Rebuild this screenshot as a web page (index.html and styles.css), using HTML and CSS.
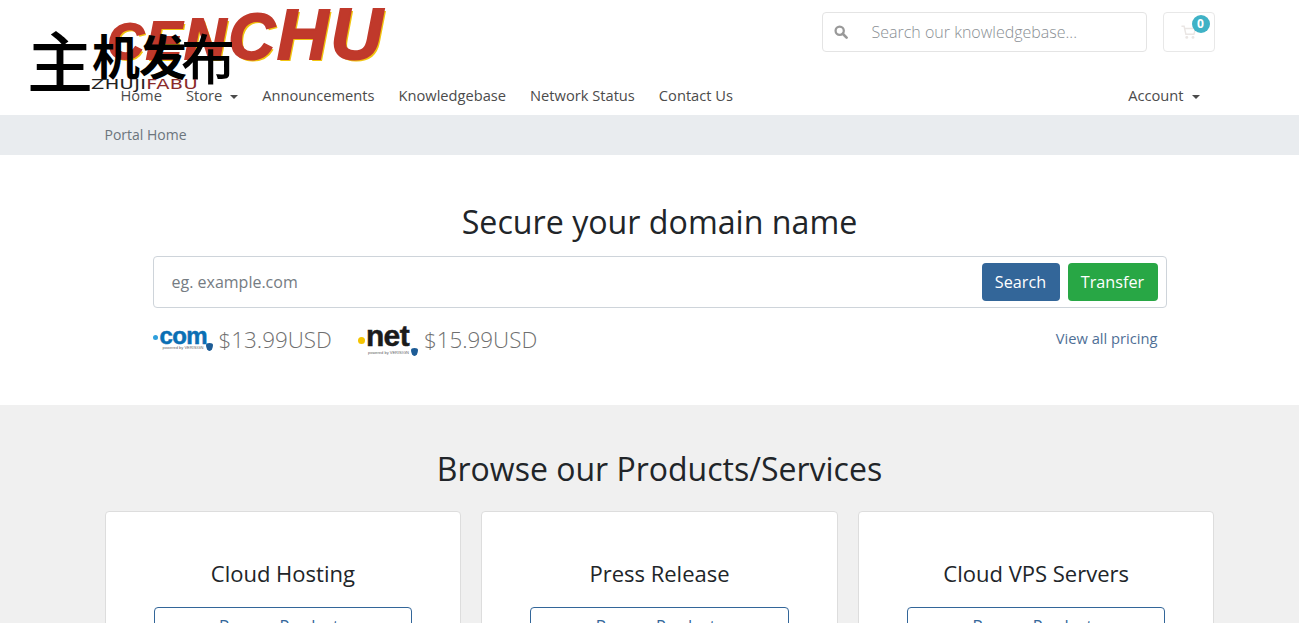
FILE: index.html
```html
<!DOCTYPE html>
<html lang="en">
<head>
<meta charset="utf-8">
<title>Portal Home</title>
<link rel="stylesheet" href="styles.css">
</head>
<body>
<header class="header">
  <div class="wrap">
    <div class="container">
      <div class="top-row">
        <div class="logo-main"><span class="l1">C</span><span class="l2">E</span><span class="l3">N</span><span class="l4">C</span><span class="l5">H</span><span class="l6">U</span></div>
        <div class="top-tools">
          <div class="kb-search">
            <svg class="kb-icon" viewBox="0 0 16 16" width="14" height="14"><circle cx="6.5" cy="6.5" r="4.7" fill="none" stroke="#999" stroke-width="2.6"/><path d="M10 10l4.4 4.4" stroke="#999" stroke-width="3" stroke-linecap="round"/></svg>
            <span class="kb-text">Search our knowledgebase...</span>
          </div>
          <div class="cart">
            <svg class="cart-icon" viewBox="0 0 18 16" width="16" height="15"><path d="M0.5 1h3l2 9h9l2-6.5H4.4" fill="none" stroke="#eae6e4" stroke-width="1.6"/><circle cx="6.5" cy="13.5" r="1.6" fill="#eae6e4"/><circle cx="13.5" cy="13.5" r="1.6" fill="#eae6e4"/></svg>
            <span class="cart-badge">0</span>
          </div>
        </div>
      </div>
      <nav class="nav">
        <ul class="nav-list">
          <li class="nav-item">Home</li>
          <li class="nav-item caret">Store</li>
          <li class="nav-item">Announcements</li>
          <li class="nav-item">Knowledgebase</li>
          <li class="nav-item">Network Status</li>
          <li class="nav-item">Contact Us</li>
        </ul>
        <div class="nav-item caret">Account</div>
      </nav>
    </div>
  </div>
  <div class="logo-over">
    <div class="logo-cn"><span class="cn-big">主</span><span class="cn-a">机</span><span class="cn-a">发</span><span class="cn-b">布</span></div>
    <div class="logo-en">ZHUJI<span class="logo-en-red">FABU</span></div>
  </div>
</header>

<div class="crumb-band">
  <div class="wrap"><div class="container crumb">Portal Home</div></div>
</div>

<section class="domain-band">
  <div class="wrap">
    <div class="container domain">
      <h2 class="domain-title">Secure your domain name</h2>
      <div class="domain-box">
        <span class="domain-placeholder">eg. example.com</span>
        <span class="btn btn-blue">Search</span>
        <span class="btn btn-green">Transfer</span>
      </div>
      <div class="tld-row">
        <div class="tld">
          <div class="tld-logo">
            <div class="tld-name com"><span class="dot dot-blue"></span>com</div>
            <div class="tld-sub sub-com"><span class="tiny">powered by VERISIGN</span><span class="shield"></span></div>
          </div>
          <span class="tld-price">$13.99USD</span>
        </div>
        <div class="tld">
          <div class="tld-logo">
            <div class="tld-name net"><span class="dot dot-yellow"></span>net</div>
            <div class="tld-sub sub-net"><span class="tiny">powered by VERISIGN</span><span class="shield"></span></div>
          </div>
          <span class="tld-price">$15.99USD</span>
        </div>
        <span class="pricing-link">View all pricing</span>
      </div>
    </div>
  </div>
</section>

<section class="products-band">
  <div class="wrap">
    <div class="container">
      <h2 class="products-title">Browse our Products/Services</h2>
      <div class="cards">
        <div class="card"><h3 class="card-title">Cloud Hosting</h3><span class="card-btn">Browse Products</span></div>
        <div class="card"><h3 class="card-title">Press Release</h3><span class="card-btn">Browse Products</span></div>
        <div class="card"><h3 class="card-title">Cloud VPS Servers</h3><span class="card-btn">Browse Products</span></div>
      </div>
    </div>
  </div>
</section>
</body>
</html>
```
FILE: styles.css
```css
* { box-sizing: border-box; }
html, body { margin: 0; height: 623px; overflow: hidden; }
body { font-family: "Open Sans", sans-serif; font-size: 14px; color: #212529; background: #fff; }
.wrap { padding-left: 20px; }
.container { width: 1110px; margin: 0 auto; }

.header { position: relative; height: 115px; background: #fff; }
.top-row { display: flex; justify-content: space-between; height: 76px; }
.logo-main {
  font-family: "Liberation Sans", sans-serif; font-weight: 700; font-style: italic;
  height: 70px; line-height: 68px; color: #c0392b; white-space: nowrap;
  -webkit-text-stroke: 2px #c0392b; text-shadow: 2px 2px 0 #f1c40f; margin-left: 3px; letter-spacing: 2.3px;
}
.l1 { font-size: 50px; }
.l2 { font-size: 54px; }
.l3 { font-size: 58px; }
.l4 { font-size: 64px; }
.l5 { font-size: 71px; }
.l6 { font-size: 72px; }
.top-tools { display: flex; gap: 16px; padding-top: 12px; }
.kb-search {
  width: 325px; height: 40px; border: 1px solid #e4e4e4; border-radius: 4px;
  display: flex; align-items: center; padding-left: 11px; gap: 24px;
}
.kb-text { font-size: 16px; font-weight: 300; color: #8a8f94; }
.cart { position: relative; width: 52px; height: 40px; border: 1px solid #e8e8e8; border-radius: 4px; padding: 12px 0 0 17px; }
.cart-icon { display: block; }
.cart-badge {
  position: absolute; top: 2px; left: 28px; width: 18px; height: 18px; border-radius: 50%;
  background: #3fb2c6; color: #fff; font-size: 12px; font-weight: 700; line-height: 18px; text-align: center;
}
.nav { display: flex; justify-content: space-between; height: 39px; margin-right: 3px; }
.nav-list { list-style: none; margin: 0 0 0 4px; padding: 0; display: flex; }
.nav-item { padding: 0 12px; line-height: 38px; color: #4b4b4b; font-size: 14.67px; white-space: nowrap; }
.caret::after {
  content: ""; display: inline-block; margin-left: 8px; vertical-align: 2px;
  border-top: 4px solid #4b4b4b; border-left: 4px solid transparent; border-right: 4px solid transparent;
}
.logo-over { position: absolute; left: 30px; top: 24px; width: 205px; height: 68px; }
.logo-cn {
  font-family: "Noto Sans CJK SC", sans-serif; font-size: 48px; line-height: 68px;
  color: #000; white-space: nowrap;
}
.cn-big { font-size: 66px; font-weight: 500; margin-right: -1px; margin-left: -3px; }
.cn-a { font-weight: 700; margin-right: -1px; position: relative; top: -12px; }
.cn-b { font-weight: 500; font-size: 54px; margin-left: -5px; position: relative; top: -7px; }
.logo-en {
  position: absolute; left: 61px; top: 53px; font-family: "DejaVu Sans", sans-serif;
  font-size: 14px; line-height: 14px; letter-spacing: 0.3px; color: #222; white-space: nowrap; transform: scaleX(1.38); transform-origin: left;
}
.logo-en-red { color: #8a2a2a; }

.crumb-band { height: 40px; background: #e9ecef; }
.crumb { line-height: 40px; font-size: 14px; color: #6c757d; }

.domain-band { height: 250px; background: #fff; }
.domain { padding: 47px 48px 0; }
.domain-title { margin: 0; font-size: 32.2px; font-weight: 400; line-height: 40px; text-align: center; color: #212529; }
.domain-box {
  margin-top: 14px; height: 52px; border: 1px solid #ced4da; border-radius: 4px;
  display: flex; align-items: center; padding: 0 8px 0 18px; gap: 8px;
}
.domain-placeholder { flex: 1; font-size: 16px; color: #757c83; }
.btn { height: 38px; line-height: 38px; border-radius: 4px; color: #fff; font-size: 16.2px; font-weight: 500; text-align: center; }
.btn-blue { width: 78px; background: #336699; }
.btn-green { width: 90px; background: #28a745; }
.tld-row { display: flex; align-items: center; margin-top: 15px; height: 32px; }
.tld { display: flex; align-items: center; margin-right: 26px; }
.tld-logo { width: 60px; margin-right: 6px; }
.tld-name { font-family: "Liberation Sans", sans-serif; font-weight: 700; display: flex; align-items: flex-end; }
.com { font-size: 24px; color: #0a6fb4; letter-spacing: -0.6px; line-height: 16px; -webkit-text-stroke: 0.5px #0a6fb4; }
.net { font-size: 30px; color: #1b1b1b; letter-spacing: -0.6px; line-height: 20px; -webkit-text-stroke: 0.5px #1b1b1b; }
.dot { display: inline-block; border-radius: 50%; -webkit-text-stroke: 0; }
.dot-blue { width: 5px; height: 5px; background: #2f9fdc; margin: 0 2px 4px 0; }
.dot-yellow { width: 7px; height: 7px; background: #f5c400; margin: 0 1px 2px 0; }
.tld-sub { display: flex; justify-content: flex-end; align-items: center; gap: 2px; height: 7px; }
.sub-net { margin-top: 3px; margin-bottom: -3px; }
.tiny { font-family: "Liberation Sans", sans-serif; font-size: 4px; line-height: 7px; color: #666; white-space: nowrap; }
.shield { width: 7px; height: 8px; border-radius: 50% 50% 50% 50% / 25% 25% 75% 75%; background: #1d5c96; flex: none; }
.tld-price { font-size: 22.4px; font-weight: 300; color: #6f6f6f; white-space: nowrap; }
.pricing-link { margin-left: auto; margin-right: 9px; padding-bottom: 2px; font-size: 14.7px; color: #4f6f96; }

.products-band { height: 400px; background: #f0f0f0; }
.products-title { margin: 0; padding-top: 44px; font-size: 32px; font-weight: 400; line-height: 40px; text-align: center; color: #212529; }
.cards { display: grid; grid-template-columns: repeat(3, 1fr); gap: 20px; margin-top: 22px; }
.card { height: 200px; background: #fff; border: 1px solid #ddd; border-radius: 4px; padding: 45px 48px 0; text-align: center; }
.card-title { margin: 0; font-size: 22px; font-weight: 400; line-height: 32px; color: #212529; }
.card-btn {
  display: block; margin-top: 18px; height: 38px; line-height: 30px; padding-top: 3px; border: 1px solid #336699; border-radius: 4px;
  color: #336699; font-size: 16.2px;
}
```
